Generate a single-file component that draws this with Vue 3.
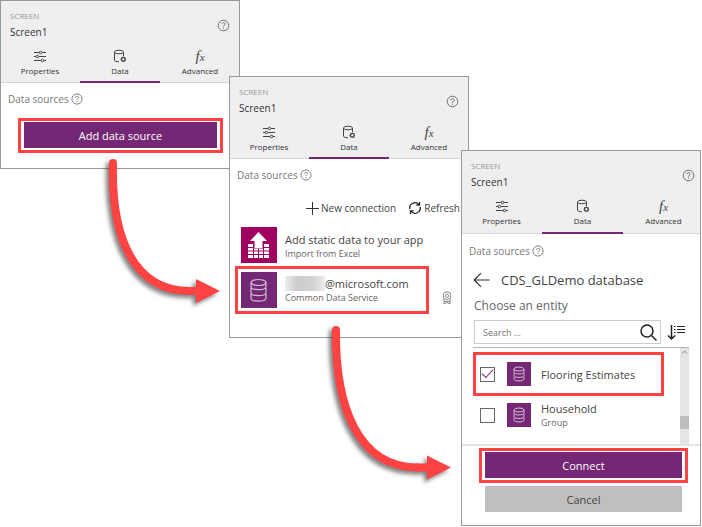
<script setup>
import { ref } from 'vue'

const panels = ['first', 'second', 'third']
const tabs = [
  { id: 'properties', label: 'Properties' },
  { id: 'data', label: 'Data' },
  { id: 'advanced', label: 'Advanced' }
]
const search = ref('')
const entities = ref([
  { id: 'flooring', name: 'Flooring Estimates', group: '', checked: true },
  { id: 'household', name: 'Household', group: 'Group', checked: false }
])
</script>

<template>
  <main class="canvas">
    <section v-for="panel in panels" :key="panel" class="panel" :class="panel">
      <header class="head">
        <div class="title-row">
          <div>
            <p class="kind">SCREEN</p>
            <h2 class="name">Screen1</h2>
          </div>
          <button class="help" aria-label="Help">
            <svg width="13" height="13" viewBox="0 0 13 13" fill="none" stroke="#6e6e6e">
              <circle cx="6.5" cy="6.5" r="5.3" />
              <path d="M4.9 5.2c0-2.2 3.3-2.1 3.3-.2 0 1.2-1.7 1.3-1.7 2.7M6.5 8.7v1.1" />
            </svg>
          </button>
        </div>
        <nav class="tabs">
          <button v-for="tab in tabs" :key="tab.id" class="tab" :class="{ active: tab.id === 'data' }">
            <svg v-if="tab.id === 'properties'" width="14" height="14" viewBox="0 0 14 14" fill="none" stroke="#444">
              <path d="M1 3.5h5M9 3.5h4M1 7.5h2M6 7.5h7M1 11.5h7M11 11.5h2" />
              <circle cx="7.5" cy="3.5" r="1.3" /><circle cx="4.3" cy="7.5" r="1.3" /><circle cx="9.5" cy="11.5" r="1.3" />
            </svg>
            <svg v-else-if="tab.id === 'data'" width="14" height="14" viewBox="0 0 14 14" fill="none" stroke="#444">
              <ellipse cx="6" cy="3" rx="4.500" ry="1.800" />
              <path d="M1.500 3v8c0 1 1.800 1.800 4.500 1.800M10.500 3v4" />
              <circle cx="10.300" cy="10.300" r="1.900" stroke-width="1.300" />
              <path d="M10.300 7.500v1M10.300 12v1M7.500 10.300h1M12.100 10.300h1M8.400 8.400l.7.7M12.200 8.400l-.7.7M8.400 12.200l.7-.7M12.200 12.200l-.7-.7" stroke-width=".7" />
            </svg>
            <span v-else class="fx">f<i>x</i></span>
            <span class="tab-label">{{ tab.label }}</span>
          </button>
        </nav>
      </header>

      <div class="sources">
        <span>Data sources</span>
        <svg width="12" height="12" viewBox="0 0 13 13" fill="none" stroke="#777">
          <circle cx="6.5" cy="6.5" r="5.5" />
          <path d="M4.900 5.200c0-2.200 3.300-2.100 3.300-.2 0 1.200-1.700 1.300-1.700 2.700M6.500 8.700v1.100" />
        </svg>
      </div>

      <div v-if="panel === 'first'" class="mark add-mark">
        <button class="primary">Add data source</button>
      </div>

      <template v-if="panel === 'second'">
        <div class="actions">
          <button class="action">
            <svg width="14" height="14" viewBox="0 0 14 14" fill="none" stroke="#333"><path d="M7.500 1v13M1 7.500h13" /></svg>
            <span>New connection</span>
          </button>
          <button class="action">
            <svg width="14" height="14" viewBox="0 0 14 14" fill="none" stroke="#222" stroke-width="1.300">
              <path d="M1.800 8A5.200 5.200 0 0 1 11 3.800M12.200 6A5.200 5.200 0 0 1 3 10.200" />
              <path d="M11.500 1v3.200H8.300M2.500 13V9.800h3.200" />
            </svg>
            <span>Refresh</span>
          </button>
        </div>
        <div class="source excel">
          <svg width="36" height="36" viewBox="0 0 36 36">
            <path fill="#a0005f" d="M0 0h36v36H0z" />
            <path fill="#fff" d="M17.500 5l8.500 9h-4.500v7h-8v-7H9z" />
            <path fill="#fff" d="M7 17h5.500v4.500h10V17H28v14H7z" />
            <path stroke="#a0005f" fill="none" d="M7 20.500h5.500M22.500 20.500H28M7 24h21M7 27.500h21M12.500 17v14M17.500 22v9M22.500 17v14" />
          </svg>
          <div class="source-text">
            <p class="source-name">Add static data to your app</p>
            <p class="sub">Import from Excel</p>
          </div>
        </div>
        <div class="cds-row">
          <div class="mark cds-mark">
            <svg width="36" height="36" viewBox="0 0 36 36" fill="none" stroke="#d5bfd5" stroke-width="1.200">
              <path fill="#742774" stroke="none" d="M0 0h36v36H0z" />
              <ellipse cx="17.500" cy="10.500" rx="7.500" ry="3" />
              <path d="M10 10.500v4c0 4.200 15 4.200 15 0v-4M10 16v4.500c0 4.200 15 4.200 15 0V16M10 22v4c0 4.200 15 4.200 15 0v-4" />
            </svg>
            <div class="source-text">
              <p class="source-name account"><span class="blurred"></span>@microsoft.com</p>
              <p class="sub">Common Data Service</p>
            </div>
          </div>
          <svg class="badge" width="10" height="14" viewBox="0 0 10 14" fill="none" stroke="#8a8a8a">
            <circle cx="5" cy="4.700" r="3.900" /><circle cx="5" cy="4.700" r="1.700" />
            <path d="M2 7.500v5.500l3-1.500 3 1.500V7.500M2 10.500h6" />
          </svg>
        </div>
      </template>

      <template v-if="panel === 'third'">
        <div class="back-row">
          <button class="icon-button" aria-label="Back">
            <svg width="17" height="16" viewBox="0 0 17 16" fill="none" stroke="#333" stroke-width="1.200"><path d="M16.500 8H1.500M8 1.200L1.200 8 8 14.800" /></svg>
          </button>
          <h3 class="database">CDS_GLDemo database</h3>
        </div>
        <p class="choose">Choose an entity</p>
        <div class="search-row">
          <div class="search">
            <input v-model="search" type="text" placeholder="Search ..." aria-label="Search entities" />
            <svg width="17" height="17" viewBox="0 0 17 17" fill="none" stroke="#222" stroke-width="1.500"><circle cx="7" cy="7" r="6" /><path d="M11.500 11.500l5 5" /></svg>
          </div>
          <button class="icon-button" aria-label="Sort">
            <svg width="18" height="17" viewBox="0 0 18 17" fill="none" stroke="#222"><path stroke-width="1.500" d="M4.500 1v14M1 11.500L4.500 15 8 11.500" /><path d="M7 2.500h1.500M10 2.500h8M7 5.500h1.500M10 5.500h8M7 8.500h1.500M10 8.500h8" stroke-width="1.200" /></svg>
          </button>
        </div>
        <div class="list">
          <div class="entities">
            <label v-for="entity in entities" :key="entity.id" class="entity" :class="{ mark: entity.checked }">
              <input v-model="entity.checked" type="checkbox" />
              <svg width="24" height="24" viewBox="0 0 24 24" fill="none" stroke="#d5bfd5">
                <path fill="#742774" stroke="none" d="M0 0h24v24H0z" />
                <ellipse cx="12" cy="7" rx="5" ry="2" />
                <path d="M7 7v3c0 2.600 10 2.600 10 0V7M7 11v2.500c0 2.600 10 2.600 10 0V11M7 14.500V17c0 2.600 10 2.600 10 0v-2.500" />
              </svg>
              <span class="entity-text">
                <span>{{ entity.name }}</span>
                <span v-if="entity.group" class="sub">{{ entity.group }}</span>
              </span>
            </label>
          </div>
          <div class="track">
            <svg width="9" height="8" viewBox="0 0 9 8" fill="none" stroke="#888"><path d="M2 5.500L4.500 3 7 5.500" /></svg>
            <div class="thumb"></div>
          </div>
        </div>
        <footer class="foot">
          <div class="mark connect-mark"><button class="primary">Connect</button></div>
          <button class="cancel">Cancel</button>
        </footer>
      </template>
    </section>

    <svg class="arrows" width="702" height="527" viewBox="0 0 702 527" fill="none" stroke="#ff4343" stroke-width="8">
      <g class="arrow">
        <path stroke-linecap="round" d="M113 163C111 238 134 291 190 291" />
        <path d="M188 291h9" />
        <path fill="#ff4343" stroke="none" d="M196 279l24 12-24 12z" />
      </g>
      <g class="arrow">
        <path stroke-linecap="round" d="M336 330C335 406 358 467.500 418 467.500" />
        <path d="M416 467.500h12" />
        <path fill="#ff4343" stroke="none" d="M427 455.500l24 12-24 12z" />
      </g>
    </svg>
  </main>
</template>

<style>
body {
  background: #fff;
}
</style>

<style scoped>
.canvas {
  position: relative;
  min-height: 527px;
  overflow: hidden;
  font-family: "Open Sans", "Noto Sans", sans-serif;
  font-size: 11px;
  color: #444;
}
.canvas * {
  box-sizing: border-box;
}
p, h2, h3 {
  margin: 0;
  font-weight: 400;
}
button {
  padding: 0;
  border: 0;
  background: none;
  font: inherit;
  color: inherit;
}
svg {
  display: block;
  flex: none;
}
.panel {
  position: absolute;
  width: 240px;
  overflow: hidden;
  border: 1px solid #999;
  background: #fff;
}
.first {
  left: 0;
  top: 0;
  padding-bottom: 15px;
}
.second {
  left: 229px;
  top: 76px;
  padding-bottom: 23px;
}
.third {
  left: 461px;
  top: 150px;
  padding-bottom: 13px;
}
.head {
  height: 82px;
  background: #efefef;
  border-bottom: 1px solid #d6d6d6;
}
.third .head {
  height: 83px;
}
.title-row {
  display: flex;
  align-items: center;
  justify-content: space-between;
  height: 48px;
  padding: 0 9px;
}
.third .title-row {
  padding-right: 5px;
}
.kind {
  font-size: 8px;
  line-height: 14px;
  color: #999;
}
.name {
  font-size: 10px;
  line-height: 18px;
  color: #333;
}
.tabs {
  display: grid;
  grid-template-columns: repeat(3, 80px);
  margin-left: -1px;
}
.third .tabs {
  grid-template-columns: repeat(3, 81px);
}
.tab {
  display: flex;
  flex-direction: column;
  align-items: center;
  gap: 1px;
  height: 34px;
}
.third .tab {
  height: 35px;
}
.active {
  border-bottom: 2px solid #742774;
}
.tab-label {
  font-size: 8px;
  line-height: 14px;
  color: #333;
}
.fx {
  height: 14px;
  font: italic 15px/14px "Liberation Serif", serif;
}
.fx i {
  font-size: 11px;
}
.sources {
  display: flex;
  align-items: center;
  gap: 2px;
  height: 32px;
  padding-left: 7px;
  font-size: 10px;
  color: #777;
}
.third .sources {
  height: 34px;
}
.mark {
  border: 3px solid #ff4343;
}
.add-mark {
  margin: 3px 16px 0 17px;
  padding: 1px 3px 2px;
}
.primary, .cancel {
  display: block;
  width: 100%;
  height: 26px;
  background: #742774;
  color: #fff;
}
.actions {
  display: flex;
  justify-content: flex-end;
  gap: 12px;
  margin-top: 9px;
  padding-right: 8px;
}
.action {
  display: flex;
  align-items: center;
  gap: 2px;
  height: 16px;
  font-size: 10px;
}
.source {
  display: flex;
  align-items: flex-start;
  gap: 8px;
  padding: 11px 11px 0;
}
.source-text {
  padding-top: 5px;
}
.source-name {
  font-size: 11px;
  line-height: 15px;
  white-space: nowrap;
}
.sub {
  font-size: 9px;
  line-height: 13px;
  color: #666;
}
.cds-row {
  display: flex;
  align-items: center;
  gap: 13px;
  padding: 3px 0 0 5px;
}
.cds-mark {
  display: flex;
  gap: 8px;
  width: 194px;
  padding: 3px;
}
.cds-mark .source-text {
  padding-top: 4px;
}
.account {
  display: flex;
}
.blurred {
  width: 40px;
  height: 15px;
  background: linear-gradient(90deg, #eee, #ccc 30%, #d2d2d2 70%, #eee);
}
.badge {
  margin-top: 16px;
}
.back-row {
  display: flex;
  align-items: center;
  gap: 11px;
  height: 24px;
  padding-left: 11px;
}
.database {
  font-size: 13px;
}
.choose {
  padding-left: 12px;
  font-size: 12px;
  line-height: 28px;
  color: #666;
}
.search-row {
  display: flex;
  align-items: center;
  gap: 6px;
  padding: 0 15px 0 12px;
}
.search {
  display: flex;
  align-items: center;
  flex: 1;
  height: 24px;
  padding-right: 3px;
  border: 1px solid #ccc;
}
.search input {
  flex: 1;
  min-width: 0;
  padding: 0 0 0 8px;
  border: 0;
  outline: 0;
  background: none;
  font: inherit;
  font-size: 9px;
}
.search input::placeholder {
  color: #777;
  opacity: 1;
}
.list {
  display: flex;
  height: 97px;
  margin: 3px 11px 0;
  border-top: 1px solid #b5b5b5;
}
.entities {
  flex: 1;
  padding-top: 4px;
}
.entity {
  display: flex;
  align-items: center;
  width: 191px;
  height: 38px;
  padding-left: 7px;
}
.entity.mark {
  height: 44px;
  padding-left: 4px;
}
.entity input {
  appearance: none;
  display: grid;
  place-items: center;
  width: 15px;
  height: 15px;
  margin: 0 12px 0 0;
  border: 1px solid #666;
}
.entity input:checked::after {
  content: "";
  width: 10px;
  height: 5px;
  border: solid #742774;
  border-width: 0 0 1px 1px;
  transform: translateY(-2px) rotate(-47deg);
}
.entity-text {
  display: flex;
  flex-direction: column;
  padding-left: 10px;
  line-height: 15px;
}
.track {
  width: 9px;
  background: #e5e5e5;
}
.thumb {
  height: 13px;
  margin-top: 60px;
  background: #bdbdbd;
}
.foot {
  padding: 2px 12px 0 17px;
  border-top: 2px solid #e3e3e3;
}
.connect-mark {
  padding: 1px 3px 2px;
}
.cancel {
  width: auto;
  min-width: calc(100% - 12px);
  margin: 3px 6px 0;
  background: #bfbfbf;
  color: #444;
}
.arrows {
  position: absolute;
  left: 0;
  top: 0;
  pointer-events: none;
}
.arrow {
  filter: drop-shadow(-3px 3px 2px rgba(0, 0, 0, 0.5));
}
</style>
